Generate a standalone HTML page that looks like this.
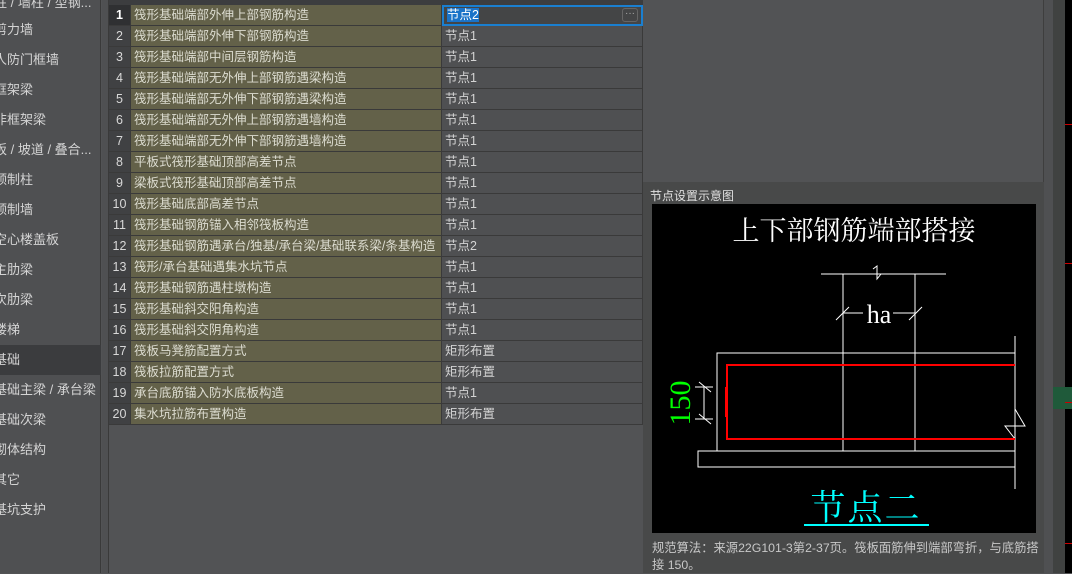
<!DOCTYPE html>
<html><head><meta charset="utf-8"><style>
*{margin:0;padding:0;box-sizing:border-box}
body{width:1072px;height:573px;overflow:hidden;background:#525355;position:relative;font-family:"Liberation Sans","Noto Sans CJK SC",sans-serif;color:#d4d4d4}
.sb{position:absolute;left:0;top:0;width:101px;height:573px;background:#4f5052;border-right:1px solid #3a3a3a}
.sb div{position:absolute;left:-6px;height:30px;line-height:30px;font-size:13px;white-space:nowrap;width:107px;padding-left:0}
.sb .sel{background:#3b3c3e}
.gap{position:absolute;left:102px;top:0;width:7px;height:573px;background:#4f5052;border-right:1px solid #3a3a3a}
.tbl{position:absolute;left:109px;top:0}
.hdr{position:absolute;left:0;top:0;width:534px;height:5px;background:#3c3d3f}
.row{position:absolute;left:0;height:21px;width:534px;font-size:12.5px;line-height:20px}
.row span{position:absolute;top:0;height:21px;border-bottom:1px solid #3a3a3a;border-right:1px solid #3a3a3a}
.n{left:0;width:22px;background:#404143;text-align:center;color:#d8d8d8}
.nm{left:22px;width:311px;background:#636149;padding-left:3px;color:#dcdcd0}
.v{left:333px;width:201px;background:#4f5052;padding-left:3px;color:#d4d4d4}
.rp{position:absolute;left:645px;top:0;width:399px;height:182px;background:#525355;border-right:1px solid #3e3e3e}
.lp{position:absolute;left:643px;top:182px;width:401px;height:391px;background:#484949}
.cap{position:absolute;left:650px;top:187px;font-size:12px;color:#e0e0e0}
.desc{position:absolute;left:652px;top:540px;white-space:nowrap;font-size:12.3px;line-height:17px;color:#c8c8c8}
</style></head><body>
<div class="sb">
<div style="top:-12px">柱 / 墙柱 / 型钢...</div>
<div style="top:15px">剪力墙</div>
<div style="top:45px">人防门框墙</div>
<div style="top:75px">框架梁</div>
<div style="top:105px">非框架梁</div>
<div style="top:135px">板 / 坡道 / 叠合...</div>
<div style="top:165px">预制柱</div>
<div style="top:195px">预制墙</div>
<div style="top:225px">空心楼盖板</div>
<div style="top:255px">主肋梁</div>
<div style="top:285px">次肋梁</div>
<div style="top:315px">楼梯</div>
<div class="sel" style="top:345px">基础</div>
<div style="top:375px">基础主梁 / 承台梁</div>
<div style="top:405px">基础次梁</div>
<div style="top:435px">砌体结构</div>
<div style="top:465px">其它</div>
<div style="top:495px">基坑支护</div>
</div>
<div class="gap"></div>
<div class="tbl">
<div class="hdr"></div>
<div class="row" style="top:5px"><span class="n" style="background:#2f3032;color:#fff;font-weight:bold">1</span><span class="nm">筏形基础端部外伸上部钢筋构造</span><span class="v" style="border:2px solid #1a7fd0;background:#444546;padding-left:3px;line-height:17px"><b style="font-weight:normal;background:#1a73c8;color:#fff">节点2</b><i style="position:absolute;right:3px;top:1px;width:16px;height:14px;border:1px solid #666;border-radius:3px;font-style:normal;font-size:10px;line-height:9px;text-align:center;color:#aaa">···</i></span></div>
<div class="row" style="top:26px"><span class="n">2</span><span class="nm">筏形基础端部外伸下部钢筋构造</span><span class="v">节点1</span></div>
<div class="row" style="top:47px"><span class="n">3</span><span class="nm">筏形基础端部中间层钢筋构造</span><span class="v">节点1</span></div>
<div class="row" style="top:68px"><span class="n">4</span><span class="nm">筏形基础端部无外伸上部钢筋遇梁构造</span><span class="v">节点1</span></div>
<div class="row" style="top:89px"><span class="n">5</span><span class="nm">筏形基础端部无外伸下部钢筋遇梁构造</span><span class="v">节点1</span></div>
<div class="row" style="top:110px"><span class="n">6</span><span class="nm">筏形基础端部无外伸上部钢筋遇墙构造</span><span class="v">节点1</span></div>
<div class="row" style="top:131px"><span class="n">7</span><span class="nm">筏形基础端部无外伸下部钢筋遇墙构造</span><span class="v">节点1</span></div>
<div class="row" style="top:152px"><span class="n">8</span><span class="nm">平板式筏形基础顶部高差节点</span><span class="v">节点1</span></div>
<div class="row" style="top:173px"><span class="n">9</span><span class="nm">梁板式筏形基础顶部高差节点</span><span class="v">节点1</span></div>
<div class="row" style="top:194px"><span class="n">10</span><span class="nm">筏形基础底部高差节点</span><span class="v">节点1</span></div>
<div class="row" style="top:215px"><span class="n">11</span><span class="nm">筏形基础钢筋锚入相邻筏板构造</span><span class="v">节点1</span></div>
<div class="row" style="top:236px"><span class="n">12</span><span class="nm">筏形基础钢筋遇承台/独基/承台梁/基础联系梁/条基构造</span><span class="v">节点2</span></div>
<div class="row" style="top:257px"><span class="n">13</span><span class="nm">筏形/承台基础遇集水坑节点</span><span class="v">节点1</span></div>
<div class="row" style="top:278px"><span class="n">14</span><span class="nm">筏形基础钢筋遇柱墩构造</span><span class="v">节点1</span></div>
<div class="row" style="top:299px"><span class="n">15</span><span class="nm">筏形基础斜交阳角构造</span><span class="v">节点1</span></div>
<div class="row" style="top:320px"><span class="n">16</span><span class="nm">筏形基础斜交阴角构造</span><span class="v">节点1</span></div>
<div class="row" style="top:341px"><span class="n">17</span><span class="nm">筏板马凳筋配置方式</span><span class="v">矩形布置</span></div>
<div class="row" style="top:362px"><span class="n">18</span><span class="nm">筏板拉筋配置方式</span><span class="v">矩形布置</span></div>
<div class="row" style="top:383px"><span class="n">19</span><span class="nm">承台底筋锚入防水底板构造</span><span class="v">节点1</span></div>
<div class="row" style="top:404px"><span class="n">20</span><span class="nm">集水坑拉筋布置构造</span><span class="v">矩形布置</span></div>
</div>
<div class="rp"></div>
<div class="lp"></div>
<div class="cap">节点设置示意图</div>
<svg style="position:absolute;left:652px;top:204px" width="384" height="329" viewBox="0 0 384 329">
<rect width="384" height="329" fill="#000"/>
<text x="202" y="36" text-anchor="middle" font-family="Liberation Serif,'Noto Serif CJK SC',serif" font-size="27" fill="#fff">上下部钢筋端部搭接</text>
<g stroke="#fff" stroke-width="1" fill="none">
<path d="M169 70H294M221 65l4-3v13l4-5M191 70V247M263 70V247"/>
<path d="M191 109H211M241 109H263M184 116l13-13M257 116l13-13"/>
<path d="M65 247V149H363M363 132V285M46 247H363V263H46Z"/>
<path d="M52 183V215M43 183H61M43 215H61M47 178l12 10M47 210l12 10"/>
<path d="M363 205l10 17H353l10 13"/>
</g>
<text x="227" y="119" text-anchor="middle" font-family="Liberation Serif,serif" font-size="26" fill="#fff">ha</text>
<path d="M363 161H75V235H363" stroke="#f00" stroke-width="2" fill="none"/>
<rect x="73" y="183" width="3" height="30" fill="#f00"/>
<text transform="translate(38 199) rotate(-90)" text-anchor="middle" font-family="Liberation Serif,serif" font-size="30" fill="#0f0">150</text>
<text x="214" y="316" text-anchor="middle" font-family="Liberation Serif,'Noto Serif CJK SC',serif" font-size="35" fill="#0ff" letter-spacing="2">节点二</text>
<path d="M152 321H277" stroke="#0ff" stroke-width="2"/>
</svg>
<div class="desc">规范算法：来源22G101-3第2-37页。筏板面筋伸到端部弯折，与底筋搭<br>接 150。</div>
<div style="position:absolute;left:1044px;top:0;width:9px;height:573px;background:#4f5052"></div>
<div style="position:absolute;left:1053px;top:0;width:12px;height:573px;background:#404241"></div>
<div style="position:absolute;left:1065px;top:0;width:7px;height:573px;background:#000"></div>
<div style="position:absolute;left:1053px;top:387px;width:19px;height:22px;background:#1f5a3a"></div>
<div style="position:absolute;left:1065px;top:124px;width:7px;height:1px;background:#c00"></div>
<div style="position:absolute;left:1065px;top:263px;width:7px;height:1px;background:#c00"></div>
<div style="position:absolute;left:1065px;top:402px;width:7px;height:1px;background:#c00"></div>
<div style="position:absolute;left:1065px;top:543px;width:7px;height:1px;background:#c00"></div>
</body></html>
